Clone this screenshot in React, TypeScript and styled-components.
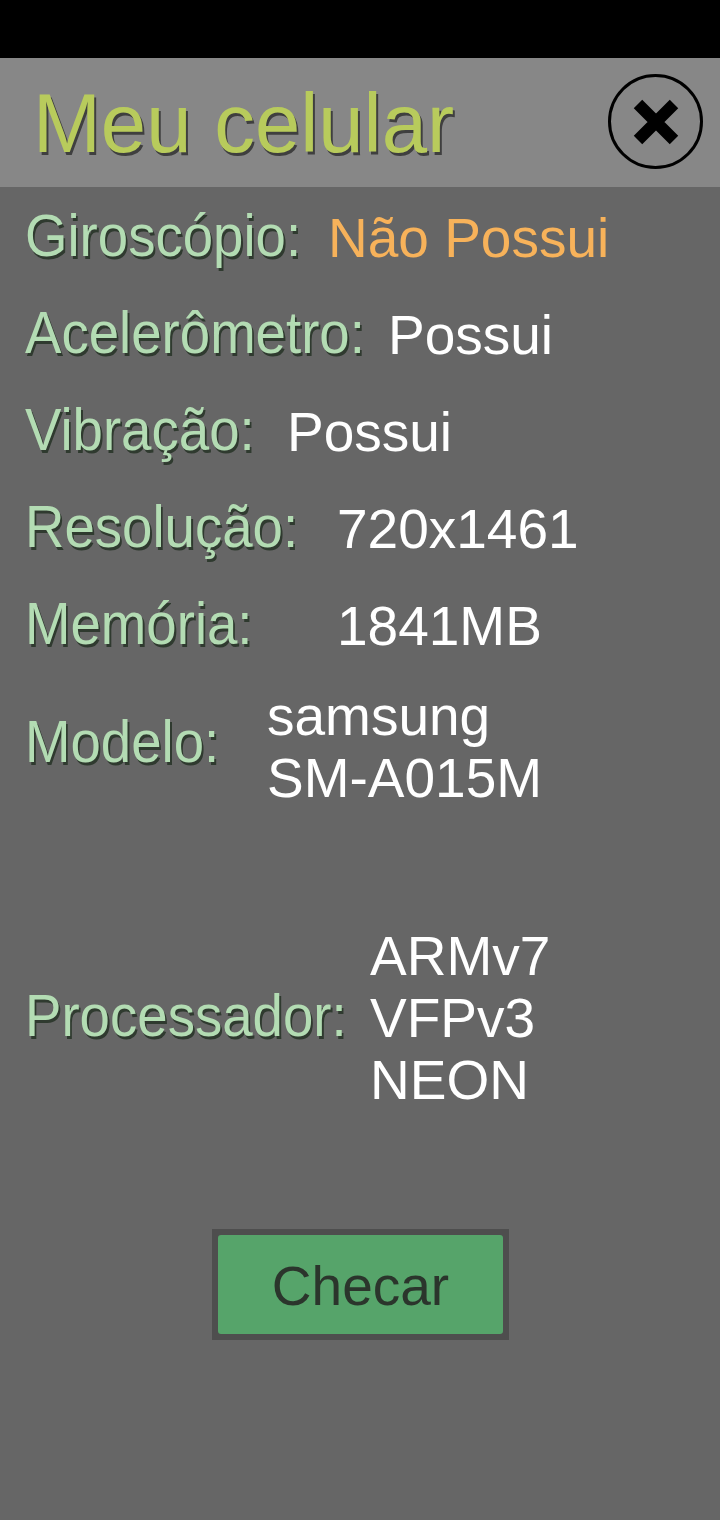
import React from 'react';
import styled, { createGlobalStyle } from 'styled-components';

const GlobalStyle = createGlobalStyle`
  html, body {
    margin: 0;
    padding: 0;
    background: #666666;
  }
  body {
    font-family: "Liberation Sans", Arial, sans-serif;
  }
`;

const Screen = styled.div`
  display: flex;
  flex-direction: column;
  width: 720px;
  min-height: 1520px;
  background: #666666;
`;

const StatusBar = styled.div`
  height: 58px;
  background: #000000;
`;

const Header = styled.header`
  display: flex;
  align-items: center;
  justify-content: space-between;
  height: 129px;
  padding: 0 17px 0 33px;
  background: #878787;
`;

const Title = styled.h1`
  margin: 0;
  font-size: 84px;
  font-weight: 400;
  line-height: 84px;
  color: #b8cb5c;
  text-shadow: 2px 3px 0 #3f3f3f;
  transform: scaleX(0.97);
  transform-origin: left center;
`;

const CloseButton = styled.button`
  display: flex;
  align-items: center;
  justify-content: center;
  width: 95px;
  height: 95px;
  padding: 0;
  border: 3px solid #000000;
  border-radius: 50%;
  background: transparent;
  margin-top: -2px;
`;

const Body = styled.main`
  display: flex;
  flex-direction: column;
  padding-left: 25px;
`;

const Row = styled.div<{ $height: number; $gap?: number }>`
  display: flex;
  align-items: center;
  height: ${({ $height }) => $height}px;
  margin-top: ${({ $gap }) => $gap ?? 0}px;
`;

const LabelCell = styled.div<{ $width: number }>`
  flex: none;
  width: ${({ $width }) => $width}px;
`;

const Label = styled.span`
  display: inline-block;
  font-size: 60px;
  line-height: 62px;
  color: #b3dcb3;
  text-shadow: 2px 3px 0 #2f3a2f;
  white-space: nowrap;
  transform: scaleX(0.91);
  transform-origin: left center;
`;

const Value = styled.div<{ $accent?: boolean; $shift?: number }>`
  font-size: 55px;
  line-height: 62px;
  color: ${({ $accent }) => ($accent ? '#f7b25a' : '#ffffff')};
  margin-top: ${({ $shift }) => $shift ?? 5}px;
  white-space: nowrap;
`;

const Footer = styled.div`
  display: flex;
  justify-content: center;
  margin-top: 113px;
  padding-left: 1px;
`;

const CheckButton = styled.button`
  width: 297px;
  height: 111px;
  padding: 0;
  border: 6px solid #4e4e4e;
  background: #4e4e4e;
  cursor: pointer;
`;

const CheckInner = styled.span`
  display: flex;
  align-items: center;
  justify-content: center;
  width: 100%;
  height: 100%;
  border-radius: 3px;
  background: #56a46a;
  font-family: "Liberation Sans", Arial, sans-serif;
  font-size: 55px;
  color: #2b352c;
  padding-top: 2px;
  box-sizing: border-box;
`;

type Info = {
  label: string;
  value: string[];
  valueX: number;
  height: number;
  gap?: number;
  accent?: boolean;
  shift?: number;
};

const rows: Info[] = [
  { label: 'Giroscópio:', value: ['Não Possui'], valueX: 328, height: 97, accent: true },
  { label: 'Acelerômetro:', value: ['Possui'], valueX: 388, height: 97 },
  { label: 'Vibração:', value: ['Possui'], valueX: 287, height: 97 },
  { label: 'Resolução:', value: ['720x1461'], valueX: 337, height: 97 },
  { label: 'Memória:', value: ['1841MB'], valueX: 337, height: 97 },
  { label: 'Modelo:', value: ['samsung', 'SM-A015M'], valueX: 267, height: 140, shift: 10 },
  { label: 'Processador:', value: ['ARMv7', 'VFPv3', 'NEON'], valueX: 370, height: 200, gap: 104, shift: 4 },
];

function CloseIcon() {
  return (
    <svg width="48" height="48" viewBox="0 0 48 48">
      <path d="M6 6 L42 42 M42 6 L6 42" stroke="#000" strokeWidth="12" strokeLinecap="butt" />
    </svg>
  );
}

export default function App() {
  return (
    <>
      <GlobalStyle />
      <Screen>
        <StatusBar />
        <Header>
          <Title>Meu celular</Title>
          <CloseButton aria-label="Fechar">
            <CloseIcon />
          </CloseButton>
        </Header>
        <Body>
          {rows.map((row) => (
            <Row key={row.label} $height={row.height} $gap={row.gap}>
              <LabelCell $width={row.valueX - 25}>
                <Label>{row.label}</Label>
              </LabelCell>
              <Value $accent={row.accent} $shift={row.shift}>
                {row.value.map((line) => (
                  <div key={line}>{line}</div>
                ))}
              </Value>
            </Row>
          ))}
        </Body>
        <Footer>
          <CheckButton>
            <CheckInner>Checar</CheckInner>
          </CheckButton>
        </Footer>
      </Screen>
    </>
  );
}
